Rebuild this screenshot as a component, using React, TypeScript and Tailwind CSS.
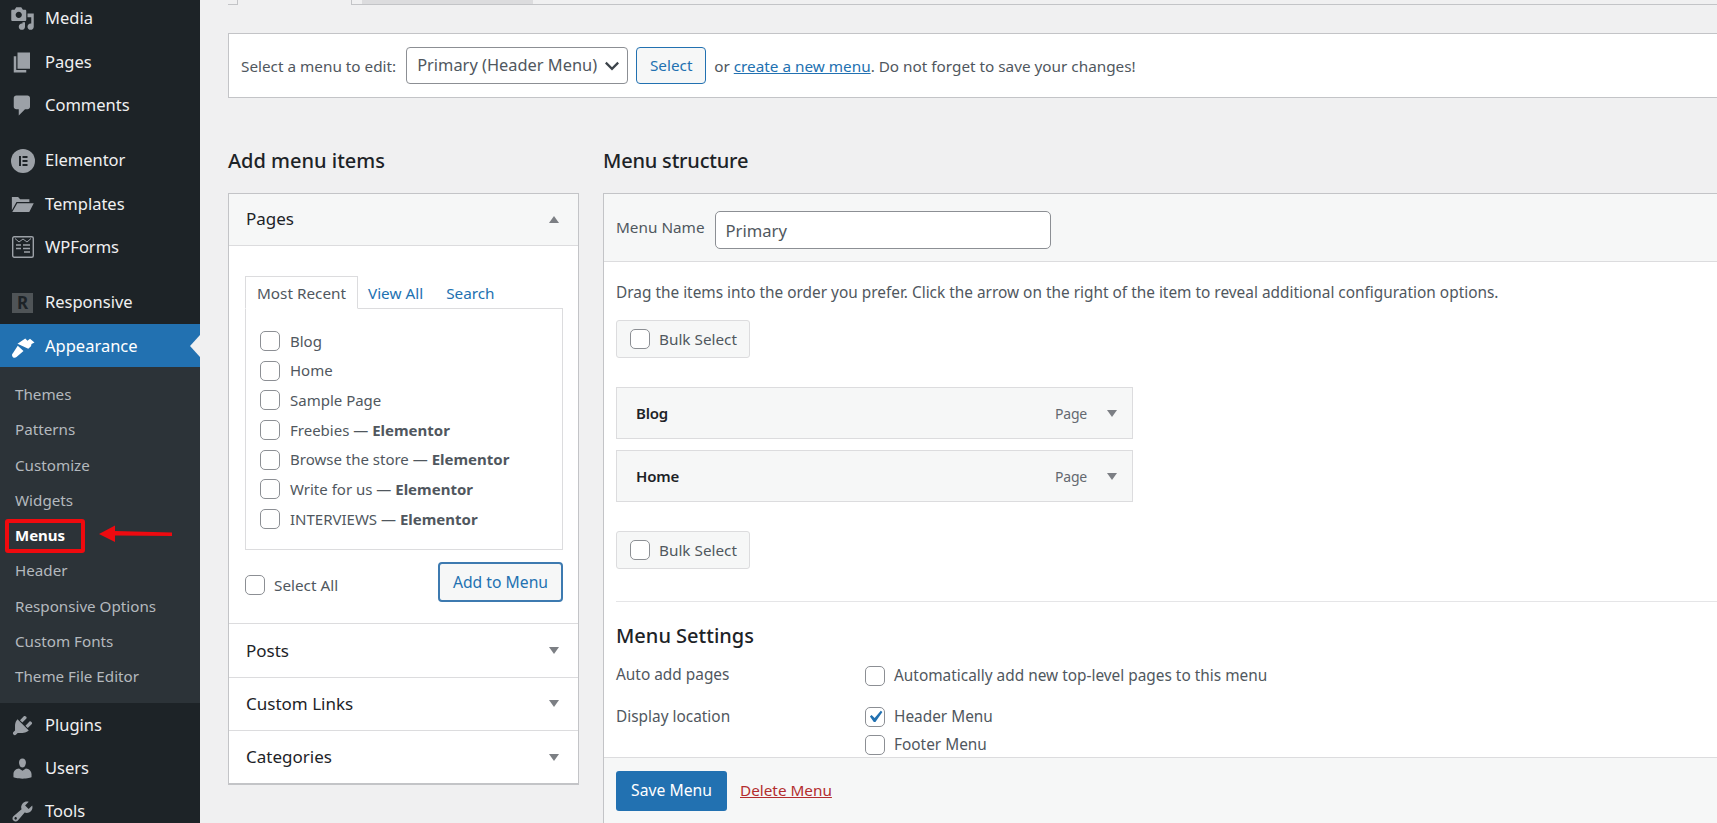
import React from "react";

const P = {
  media: "M13 11V4c0-.55-.45-1-1-1h-1.67L9 1H5L3.67 3H2c-.55 0-1 .45-1 1v7c0 .55.45 1 1 1h10c.55 0 1-.45 1-1zM7 4.5c1.38 0 2.5 1.12 2.5 2.5S8.38 9.5 7 9.5 4.5 8.38 4.5 7 5.62 4.5 7 4.5zM14 6h5v10.5c0 1.38-1.12 2.5-2.5 2.5S14 17.88 14 16.5s1.12-2.5 2.5-2.5c.17 0 .34.02.5.05V9h-3V6zm-4 8.05V13h2v3.5c0 1.38-1.12 2.5-2.5 2.5S7 17.88 7 16.5 8.12 14 9.5 14c.17 0 .34.02.5.05z",
  page: "M6 15V2h10v13H6zm-1 1h8v2H3V5h2v11z",
  comment: "M5 2h9q.82 0 1.41.59T16 4v7q0 .82-.59 1.41T14 13h-2l-5 5v-5H5q-.82 0-1.41-.59T3 11V4q0-.82.59-1.41T5 2z",
  folder: "M1.5 4h5l1.6 1.8h7.4V8H5.2L1.5 14.5zM5.8 9H19l-3.6 7H1.8z",
  brush: "M6 7.8 12.2 3.6 14 5.4 16 3.8 19.6 6.8 17.2 8 16.8 9.8 14.6 11.8zM6.2 9.4 10.8 13.6 5.2 18.4c-.9.8-2.2.8-3-.1s-.8-2.1.1-2.9z",
  plug: "M13.11 4.36L9.87 7.6 8 5.73l3.24-3.24c.35-.34 1.05-.2 1.56.32.52.51.66 1.21.31 1.55zm-8 1.77l.91-1.12 9.01 9.01-1.19.84c-.71.71-2.63 1.16-3.82 1.16H6.14L4.9 17.26c-.59.59-1.54.59-2.12 0-.59-.58-.59-1.53 0-2.12l1.24-1.24v-3.88c0-1.13.4-3.19 1.09-3.89zm7.26 3.97l3.24-3.24c.34-.35 1.04-.21 1.55.31.52.51.66 1.21.31 1.55l-3.24 3.25z",
  user: "M10 9.25c-2.27 0-2.73-3.44-2.73-3.44C7 4.02 7.82 2 9.97 2c2.16 0 2.98 2.02 2.71 3.81 0 0-.41 3.44-2.68 3.44zm0 2.57L12.72 10c2.39 0 4.52 2.33 4.52 4.53v2.49s-3.65 1.13-7.24 1.13c-3.65 0-7.24-1.13-7.24-1.13v-2.49c0-2.25 1.94-4.48 4.47-4.48z",
  tools: "M16.68 9.77c-1.34 1.34-3.3 1.67-4.95.99l-5.41 6.52c-.99.99-2.59.99-3.58 0s-.99-2.59 0-3.57l6.52-5.42c-.68-1.65-.35-3.61.99-4.95 1.28-1.28 3.12-1.62 4.72-1.06l-2.89 2.89 2.82 2.82 2.86-2.87c.53 1.58.18 3.39-1.08 4.65zM3.81 16.21c.4.39 1.04.39 1.43 0 .4-.4.4-1.04 0-1.43-.39-.4-1.03-.4-1.43 0-.39.39-.39 1.03 0 1.43z",
};

function Dash({ d, white }: { d: string; white?: boolean }) {
  return (
    <svg viewBox="0 0 20 20" className={white ? "w-[25px] h-[25px] fill-white" : "w-[25px] h-[25px] fill-[#9ca1a7]"}>
      <path d={d} />
    </svg>
  );
}

function ElementorIcon() {
  return (
    <svg viewBox="0 0 24 24" className="w-[24px] h-[24px] ml-[1px]">
      <circle cx="12" cy="12" r="12" fill="#9ca1a7" />
      <rect x="8" y="7" width="2" height="10" fill="#1d2327" />
      <rect x="11.5" y="7" width="5" height="2" fill="#1d2327" />
      <rect x="11.5" y="11" width="5" height="2" fill="#1d2327" />
      <rect x="11.5" y="15" width="5" height="2" fill="#1d2327" />
    </svg>
  );
}

function WPFormsIcon() {
  return (
    <svg viewBox="0 0 22 22" className="w-[22px] h-[22px] fill-none stroke-[#9ca1a7]">
      <rect x="0.7" y="0.7" width="20.6" height="20.6" rx="1.5" strokeWidth="1.4" />
      <path d="M3 2.5 7 6l4-3 4 3 4-3.5" strokeWidth="1" />
      <path d="M4 9h5M11 9h7M4 12.5h5M11 12.5h7M12 16h6" strokeWidth="1.4" />
    </svg>
  );
}

function ResponsiveIcon() {
  return (
    <div className="w-[21px] h-[20px] bg-[#4f5457] flex items-center justify-center text-[#1d2327] font-bold text-[17px] leading-none">R</div>
  );
}

function NavRow({ icon, label, cls = "" }: { icon: React.ReactNode; label: string; cls?: string }) {
  return (
    <div className={"h-[43.35px] flex items-center text-[#f0f0f1] text-[16.5px] " + cls}>
      <div className="w-[45px] pl-[10px] flex items-center shrink-0">{icon}</div>
      <span>{label}</span>
    </div>
  );
}

function SubRow({ label, active }: { label: string; active?: boolean }) {
  return (
    <div className={active ? "h-[35.3px] flex items-center pl-[15px] text-white font-bold text-[15px]" : "h-[35.3px] flex items-center pl-[15px] text-[#b4b9be] text-[15.2px]"}>
      {label}
    </div>
  );
}

function Sidebar() {
  return (
    <aside className="relative w-[200px] shrink-0 h-[823px] bg-[#1d2327] overflow-hidden">
      <div className="-mt-[3px]">
        <NavRow icon={<Dash d={P.media} />} label="Media" />
        <NavRow icon={<Dash d={P.page} />} label="Pages" />
        <NavRow icon={<Dash d={P.comment} />} label="Comments" />
        <div className="h-[12px]" />
        <NavRow icon={<ElementorIcon />} label="Elementor" />
        <NavRow icon={<Dash d={P.folder} />} label="Templates" />
        <NavRow icon={<div className="pl-[2px]"><WPFormsIcon /></div>} label="WPForms" />
        <div className="h-[12px]" />
        <NavRow icon={<div className="pl-[2px]"><ResponsiveIcon /></div>} label="Responsive" cls="-mb-[0.5px]" />
        <div className="relative">
          <NavRow icon={<Dash d={P.brush} white />} label="Appearance" cls="bg-[#2271b1] text-white pt-[1px]" />
          <div className="absolute right-0 top-[11px] w-0 h-0 border-y-[11px] border-y-transparent border-r-[10px] border-r-[#f0f0f1]" />
        </div>
        <div className="bg-[#2c3338] pt-[9.5px] pb-[9px]">
          <SubRow label="Themes" />
          <SubRow label="Patterns" />
          <SubRow label="Customize" />
          <SubRow label="Widgets" />
          <SubRow label="Menus" active />
          <SubRow label="Header" />
          <SubRow label="Responsive Options" />
          <SubRow label="Custom Fonts" />
          <SubRow label="Theme File Editor" />
        </div>
        <NavRow icon={<Dash d={P.plug} />} label="Plugins" />
        <NavRow icon={<Dash d={P.user} />} label="Users" />
        <NavRow icon={<Dash d={P.tools} />} label="Tools" />
      </div>
      <div className="absolute left-[5px] top-[519px] w-[80px] h-[34px] border-[4px] border-[#f00a0e] rounded-[3px]" />
      <svg className="absolute left-[95px] top-[520px] w-[85px] h-[30px]" viewBox="0 0 85 30">
        <path d="M4 14 20 5.5v5.5l57 1.5v3.5L20 15.5V22z" fill="#ee0a10" />
      </svg>
    </aside>
  );
}

function Check({ checked }: { checked?: boolean }) {
  return (
    <span className="relative shrink-0 w-[20px] h-[20px] border border-[#8c8f94] rounded-[5px] bg-white flex items-center justify-center">
      {checked && (
        <svg viewBox="0 0 20 20" className="w-[24px] h-[24px] shrink-0 fill-[#2271b1]">
          <path d="M14.83 4.89l1.34.94-5.81 8.38H9.02L5.78 9.67l1.34-1.25 2.57 2.4z" />
        </svg>
      )}
    </span>
  );
}

function Arrow({ up }: { up?: boolean }) {
  return (
    <span className={up ? "w-0 h-0 border-x-[5px] border-x-transparent border-b-[7px] border-b-[#7c7f84]" : "w-0 h-0 border-x-[5px] border-x-transparent border-t-[7px] border-t-[#7c7f84]"} />
  );
}

function PageRow({ name, bold }: { name: string; bold?: string }) {
  return (
    <div className="h-[29.7px] flex items-center gap-[10px] text-[15px]">
      <Check />
      <span>
        {name}
        {bold && (
          <>
            {" — "}
            <b className="font-bold">{bold}</b>
          </>
        )}
      </span>
    </div>
  );
}

function Collapsed({ label, h = "h-[53.5px]" }: { label: string; h?: string }) {
  return (
    <div className={"flex items-center justify-between pl-[17px] pr-[19px] border-t border-[#dcdcde] text-[#1d2327] text-[17px] " + h}>
      <span>{label}</span>
      <Arrow />
    </div>
  );
}

function LeftColumn() {
  return (
    <section className="w-[351px] shrink-0">
      <h2 className="h-[32px] flex items-center text-[20px] text-[#1d2327] font-medium leading-none">Add menu items</h2>
      <div className="mt-[16px] border border-[#c3c4c7] border-b-2 bg-white">
        <div className="h-[51px] flex items-center justify-between pl-[17px] pr-[19px] bg-[#f6f7f7] text-[#1d2327] text-[17px]">
          <span className="-mt-[2px]">Pages</span>
          <Arrow up />
        </div>
        <div className="border-t border-[#dcdcde] pt-[30px] px-[16px] h-[378px]">
          <div className="flex items-end h-[32px] text-[15.3px]">
            <div className="w-[113px] h-[33px] pt-[2px] -mb-px relative border border-[#dcdcde] border-b-white bg-white flex items-center justify-center">Most Recent</div>
            <span className="h-[32px] pt-[2px] flex items-center ml-[10px] text-[#2271b1]">View All</span>
            <span className="h-[32px] pt-[2px] flex items-center ml-[23px] text-[#2271b1]">Search</span>
          </div>
          <div className="w-[318px] h-[242px] border border-[#dcdcde] pt-[17px] pl-[14px]">
            <PageRow name="Blog" />
            <PageRow name="Home" />
            <PageRow name="Sample Page" />
            <PageRow name="Freebies" bold="Elementor" />
            <PageRow name="Browse the store" bold="Elementor" />
            <PageRow name="Write for us" bold="Elementor" />
            <PageRow name="INTERVIEWS" bold="Elementor" />
          </div>
          <div className="flex items-start justify-between mt-[12px] w-[318px]">
            <div className="flex items-center gap-[9px] mt-[12px] text-[15.3px]">
              <Check />
              <span>Select All</span>
            </div>
            <div className="w-[125px] h-[40px] pt-[2px] rounded-[4px] border-2 border-[#3d7ab0] bg-[#f6f7f7] text-[#2271b1] text-[15.7px] flex items-center justify-center">Add to Menu</div>
          </div>
        </div>
        <Collapsed label="Posts" />
        <Collapsed label="Custom Links" />
        <Collapsed label="Categories" h="h-[53px]" />
      </div>
    </section>
  );
}

function BulkSelect() {
  return (
    <div className="w-[134px] h-[38px] border border-[#dcdcde] rounded-[3px] bg-[#f6f7f7] flex items-center pl-[13px] gap-[9px] text-[15.3px]">
      <Check />
      <span>Bulk Select</span>
    </div>
  );
}

function MenuItem({ label }: { label: string }) {
  return (
    <div className="w-[517px] h-[52px] border border-[#dcdcde] bg-[#f6f7f7] flex items-center pl-[19px] pr-[15px]">
      <span className="flex-1 font-semibold text-[15px] text-[#1d2327] tracking-[-0.2px]">{label}</span>
      <span className="text-[#646970] text-[14px] tracking-[-0.2px] mr-[20px]">Page</span>
      <Arrow />
    </div>
  );
}

function RightColumn() {
  return (
    <section className="flex-1 min-w-0">
      <h2 className="h-[32px] flex items-center text-[20px] text-[#1d2327] font-medium leading-none tracking-[-0.2px]">Menu structure</h2>
      <div className="mt-[16px] border-l border-t border-[#c3c4c7] bg-white h-[630px] flex flex-col">
        <div className="h-[68px] shrink-0 border-b border-[#dcdcde] bg-[#f6f7f7] flex items-center pl-[12px] text-[15.3px]">
          <span className="-mt-[1px]">Menu Name</span>
          <div className="ml-[10px] mt-[4px] w-[336px] h-[38px] border border-[#8c8f94] rounded-[5px] bg-white flex items-center pl-[10px] pt-[3px] text-[16.6px]">Primary</div>
        </div>
        <div className="flex-1 pl-[12px] pt-[19px] min-h-0">
          <p className="h-[24px] flex items-center text-[15.4px]">Drag the items into the order you prefer. Click the arrow on the right of the item to reveal additional configuration options.</p>
          <div className="mt-[15px]"><BulkSelect /></div>
          <div className="mt-[29px] flex flex-col gap-[11px]">
            <MenuItem label="Blog" />
            <MenuItem label="Home" />
          </div>
          <div className="mt-[29px]"><BulkSelect /></div>
          <div className="mt-[32px] border-t border-[#e5e5e7] pt-[20px]">
            <h3 className="h-[28px] flex items-center text-[20px] font-medium text-[#1d2327]">Menu Settings</h3>
            <div className="flex mt-[14px] text-[15.4px]">
              <div className="w-[249px] -mt-[1px] text-[#50575e]">Auto add pages</div>
              <div className="flex items-center gap-[9px]"><Check /><span>Automatically add new top-level pages to this menu</span></div>
            </div>
            <div className="flex mt-[19px] text-[15.4px]">
              <div className="w-[249px] -mt-[1px] text-[#50575e]">Display location</div>
              <div className="flex flex-col gap-[7px]">
                <div className="h-[21px] flex items-center gap-[9px]"><Check checked /><span>Header Menu</span></div>
                <div className="h-[21px] flex items-center gap-[9px]"><Check /><span>Footer Menu</span></div>
              </div>
            </div>
          </div>
        </div>
        <div className="h-[66px] shrink-0 border-t border-[#dcdcde] bg-[#f6f7f7] flex items-center pl-[12px]">
          <div className="w-[111px] h-[40px] rounded-[3px] bg-[#2271b1] text-white text-[15.7px] flex items-center justify-center">Save Menu</div>
          <span className="ml-[13px] text-[#b32d2e] underline text-[15.3px]">Delete Menu</span>
        </div>
      </div>
    </section>
  );
}

export default function App() {
  return (
    <div className="flex w-[1717px] h-[823px] overflow-hidden bg-[#f0f0f1] text-[#50575e] font-['Noto_Sans',sans-serif]">
      <Sidebar />
      <main className="flex-1 min-w-0 pl-[28px]">
        <div className="h-[5px] flex">
          <div className="w-[9px] h-[5px] border-b border-[#c3c4c7]" />
          <div className="w-[115px] h-[5px] border-l border-r border-[#c3c4c7]" />
          <div className="w-[10px] h-[5px] border-b border-[#c3c4c7]" />
          <div className="w-[171px] h-[5px] border-b border-[#c3c4c7] bg-[#dcdcde]" />
          <div className="flex-1 h-[5px] border-b border-[#c3c4c7]" />
        </div>
        <div className="mt-[28px] h-[65px] border-y border-l border-[#c3c4c7] bg-white flex items-center pl-[12px] text-[15.3px]">
          <span className="pt-[1px]">Select a menu to edit:</span>
          <div className="ml-[10px] w-[222px] h-[37px] border border-[#8c8f94] rounded-[4px] bg-white flex items-center justify-between pl-[10px] pr-[6px] text-[16.4px] shrink-0">
            <span>Primary (Header Menu)</span>
            <svg viewBox="0 0 16 16" className="w-[18px] h-[18px] shrink-0 fill-none stroke-[#3c434a] stroke-2"><path d="M2.5 5 8 10.5 13.5 5" /></svg>
          </div>
          <div className="ml-[8px] w-[70px] h-[37px] border border-[#2271b1] rounded-[4px] bg-[#f6f7f7] text-[#2271b1] flex items-center justify-center shrink-0">Select</div>
          <span className="ml-[8px] pt-[1px]">or <span className="text-[#2271b1] underline">create a new menu</span>. Do not forget to save your changes!</span>
        </div>
        <div className="mt-[47px] flex gap-[24px]">
          <LeftColumn />
          <RightColumn />
        </div>
      </main>
    </div>
  );
}
